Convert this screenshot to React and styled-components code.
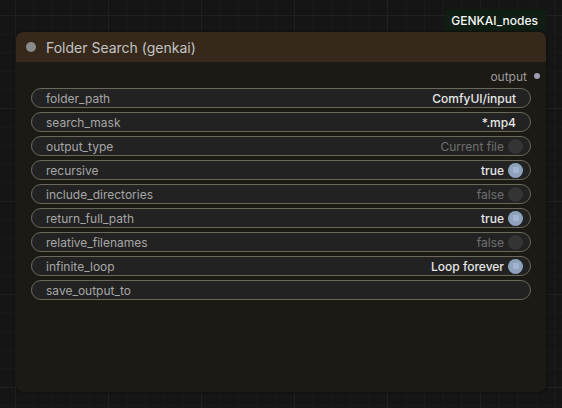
import styled, { createGlobalStyle } from 'styled-components';

const GlobalStyle = createGlobalStyle`
  html, body {
    margin: 0;
    padding: 0;
    background: #151515;
  }
  * {
    box-sizing: border-box;
  }
`;

const widgets = [
  { name: 'folder_path', value: 'ComfyUI/input', kind: 'text' },
  { name: 'search_mask', value: '*.mp4', kind: 'text' },
  { name: 'output_type', value: 'Current file', kind: 'toggle', on: false },
  { name: 'recursive', value: 'true', kind: 'toggle', on: true },
  { name: 'include_directories', value: 'false', kind: 'toggle', on: false },
  { name: 'return_full_path', value: 'true', kind: 'toggle', on: true },
  { name: 'relative_filenames', value: 'false', kind: 'toggle', on: false },
  { name: 'infinite_loop', value: 'Loop forever', kind: 'toggle', on: true },
  { name: 'save_output_to', value: '', kind: 'text' },
];

const App = () => {
  return (
    <>
      <GlobalStyle />
      <Canvas>
        <BadgeRow>
          <Badge>GENKAI_nodes</Badge>
        </BadgeRow>
        <Node>
          <Header>
            <HeaderDot />
            <Title>Folder Search (genkai)</Title>
          </Header>
          <Body>
            <OutputRow>
              <span>output</span>
              <Slot />
            </OutputRow>
            <WidgetList>
              {widgets.map((w) => (
                <Widget key={w.name} $toggle={w.kind === 'toggle'}>
                  <Label>{w.name}</Label>
                  <Value $on={w.kind === 'text' || w.on}>{w.value}</Value>
                  {w.kind === 'toggle' && <Toggle $on={w.on} />}
                </Widget>
              ))}
            </WidgetList>
          </Body>
        </Node>
      </Canvas>
    </>
  );
};

const Canvas = styled.div`
  width: 562px;
  height: 408px;
  padding: 9px 16px 0 16px;
  display: flex;
  flex-direction: column;
  font-family: Inter, 'Noto Sans', sans-serif;
  background-color: #151515;
  background-image:
    linear-gradient(to right, #202020 1px, transparent 1px),
    linear-gradient(to bottom, #202020 1px, transparent 1px),
    linear-gradient(to right, #1a1a1a 1px, transparent 1px),
    linear-gradient(to bottom, #1a1a1a 1px, transparent 1px);
  background-size: 93px 93px, 93px 93px, 18.6px 18.6px, 18.6px 18.6px;
  background-position: 15px 15px, 15px 15px, 15px 15px, 15px 15px;
`;

const BadgeRow = styled.div`
  display: flex;
  justify-content: flex-end;
  margin-bottom: 1px;
`;

const Badge = styled.div`
  height: 22px;
  padding: 0 8px 0 6px;
  display: flex;
  align-items: center;
  background: #0f1d12;
  border-radius: 4px 4px 0 0;
  color: #f6f6f6;
  font-size: 12px;
  font-weight: 500;
`;

const Node = styled.div`
  width: 530px;
  height: 360px;
  border-radius: 7px;
  overflow: hidden;
  background: #1b1a15;
  box-shadow: 0 0 3px rgba(0, 0, 0, 0.6);
  display: flex;
  flex-direction: column;
`;

const Header = styled.div`
  height: 30px;
  flex: none;
  display: flex;
  align-items: center;
  padding-left: 10px;
  gap: 10px;
  background: #36291c;
`;

const HeaderDot = styled.div`
  width: 10px;
  height: 10px;
  border-radius: 50%;
  background: #8a8a8a;
`;

const Title = styled.span`
  color: #c4c4c4;
  font-size: 14px;
`;

const Body = styled.div`
  padding-top: 8px;
  display: flex;
  flex-direction: column;
`;

const OutputRow = styled.div`
  height: 12px;
  display: flex;
  align-items: center;
  justify-content: flex-end;
  gap: 7px;
  padding-right: 6px;
  margin-bottom: 6px;
  color: #9c9c9c;
  font-size: 12px;
`;

const Slot = styled.div`
  width: 6px;
  height: 6px;
  border-radius: 50%;
  background: #a09eb0;
`;

const WidgetList = styled.div`
  display: flex;
  flex-direction: column;
  gap: 4px;
  padding: 0 15px;
`;

const Widget = styled.div`
  height: 20px;
  display: flex;
  align-items: center;
  padding: 0 ${(p) => (p.$toggle ? '7px' : '14px')} 0 14px;
  background: #222222;
  border: 1px solid #6a685c;
  border-radius: 10px;
  font-size: 12px;
`;

const Label = styled.span`
  flex: 1;
  color: #a6a6a6;
`;

const Value = styled.span`
  color: ${(p) => (p.$on ? '#e6e6e6' : '#6f6f6f')};
  font-weight: ${(p) => (p.$on ? 500 : 400)};
`;

const Toggle = styled.div`
  width: 15px;
  height: 15px;
  margin-left: 4px;
  border-radius: 50%;
  background: ${(p) => (p.$on ? '#8fa2bd' : '#343434')};
  display: flex;
  align-items: center;
  justify-content: center;
  &::after {
    content: '';
    width: 6px;
    height: 6px;
    border-radius: 1px;
    background: ${(p) => (p.$on ? '#a3b4cc' : 'transparent')};
  }
`;

export default App;
